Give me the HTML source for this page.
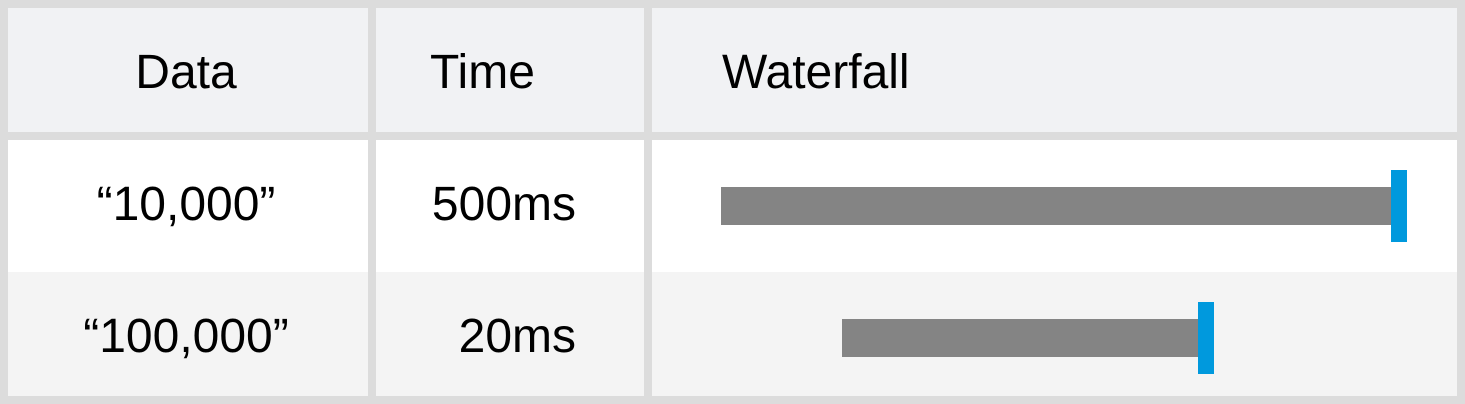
<!DOCTYPE html>
<html><head><meta charset="utf-8"><style>
html,body{margin:0;padding:0}
body{width:1465px;height:404px;background:#dcdcdc;position:relative;overflow:hidden;font-family:"Liberation Sans",sans-serif;color:#000}
.c{position:absolute}
.t{position:absolute;font-size:48px;line-height:48px;white-space:nowrap}
</style></head><body>
<div class="c" style="left:8px;top:8px;width:360px;height:124px;background:#f1f2f4"></div>
<div class="c" style="left:376px;top:8px;width:268px;height:124px;background:#f1f2f4"></div>
<div class="c" style="left:652px;top:8px;width:805px;height:124px;background:#f1f2f4"></div>
<div class="c" style="left:8px;top:140px;width:360px;height:132px;background:#fff"></div>
<div class="c" style="left:376px;top:140px;width:268px;height:132px;background:#fff"></div>
<div class="c" style="left:652px;top:140px;width:805px;height:132px;background:#fff"></div>
<div class="c" style="left:8px;top:272px;width:360px;height:124px;background:#f4f4f4"></div>
<div class="c" style="left:376px;top:272px;width:268px;height:124px;background:#f4f4f4"></div>
<div class="c" style="left:652px;top:272px;width:805px;height:124px;background:#f4f4f4"></div>

<div class="t" style="left:86px;width:200px;text-align:center;top:49px">Data</div>
<div class="t" style="left:430px;top:49px">Time</div>
<div class="t" style="left:722px;top:49px">Waterfall</div>

<div class="t" style="left:36px;width:300px;text-align:center;top:181px">“10,000”</div>
<div class="t" style="left:376px;width:200px;text-align:right;top:181px">500ms</div>
<div class="t" style="left:36px;width:300px;text-align:center;top:313px">“100,000”</div>
<div class="t" style="left:376px;width:200px;text-align:right;top:313px">20ms</div>

<div class="c" style="left:721px;top:187px;width:670px;height:38px;background:#848484"></div>
<div class="c" style="left:1391px;top:170px;width:16px;height:72px;background:#0099dd"></div>
<div class="c" style="left:842px;top:319px;width:356px;height:38px;background:#848484"></div>
<div class="c" style="left:1198px;top:302px;width:16px;height:72px;background:#0099dd"></div>
</body></html>
